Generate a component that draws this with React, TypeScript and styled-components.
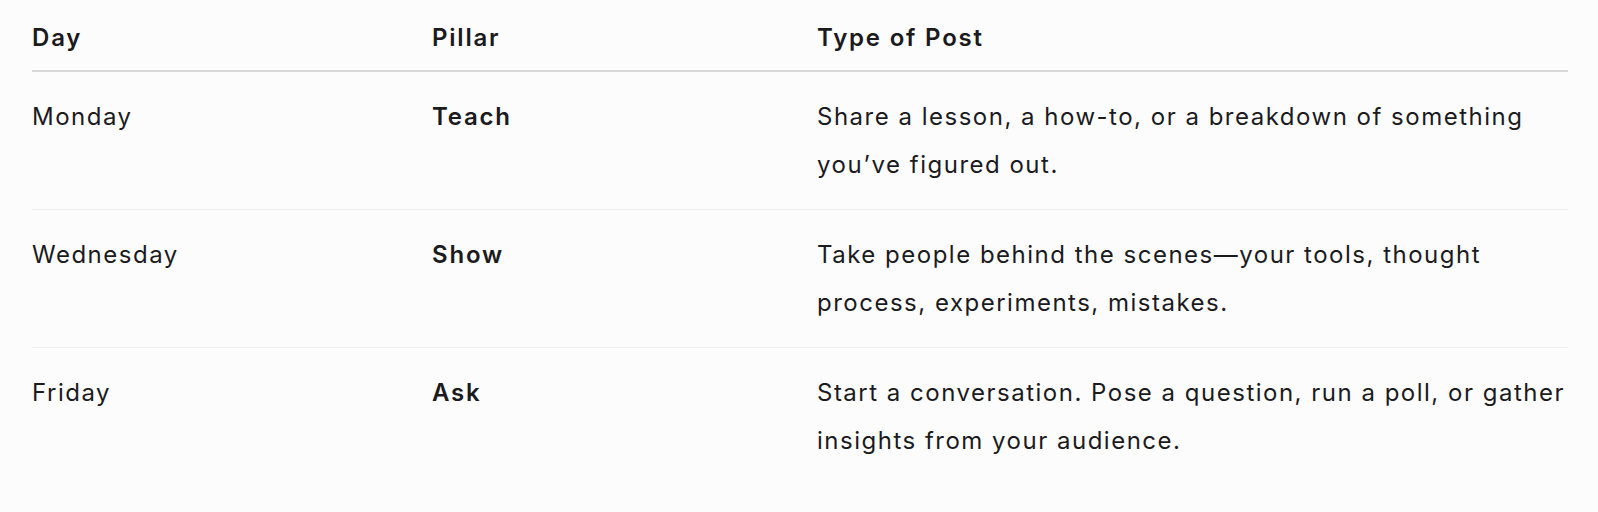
import React from "react"
import styled, { createGlobalStyle } from "styled-components"

const GlobalStyle = createGlobalStyle`
  html, body {
    margin: 0;
    padding: 0;
    background: #fdfcfd;
  }
  body {
    font-family: Inter, "Noto Sans", "Liberation Sans", sans-serif;
    color: #1b1b1d;
    -webkit-font-smoothing: antialiased;
  }
`

type Plan = {
  day: string
  pillar: string
  post: string
}

const plans: Plan[] = [
  { day: "Monday", pillar: "Teach", post: "Share a lesson, a how-to, or a breakdown of something you’ve figured out." },
  { day: "Wednesday", pillar: "Show", post: "Take people behind the scenes—your tools, thought process, experiments, mistakes." },
  { day: "Friday", pillar: "Ask", post: "Start a conversation. Pose a question, run a poll, or gather insights from your audience." },
]

export default function App() {
  return (
    <>
      <GlobalStyle />
      <S.Page>
        <S.Table>
          <colgroup>
            <col style={{ width: 400 }} />
            <col style={{ width: 385 }} />
            <col />
          </colgroup>
          <thead>
            <tr>
              <S.HeadCell>Day</S.HeadCell>
              <S.HeadCell>Pillar</S.HeadCell>
              <S.HeadCell>Type of Post</S.HeadCell>
            </tr>
          </thead>
          <tbody>
            {plans.map((p, i) => (
              <S.Row key={p.day} $last={i === plans.length - 1}>
                <S.Cell>{p.day}</S.Cell>
                <S.Cell $strong>{p.pillar}</S.Cell>
                <S.Cell>{p.post}</S.Cell>
              </S.Row>
            ))}
          </tbody>
        </S.Table>
      </S.Page>
    </>
  )
}

const S = {
  Page: styled.div`
    padding: 0 30px 0 32px;
  `,
  Table: styled.table`
    width: 100%;
    border-collapse: collapse;
    table-layout: fixed;
    font-size: 24px;
    line-height: 48px;
  `,
  HeadCell: styled.th`
    text-align: left;
    font-weight: 600;
    letter-spacing: 1.8px;
    padding: 14px 0 8px;
    border-bottom: 2px solid #d9d9d9;
    vertical-align: top;
  `,
  Row: styled.tr<{ $last?: boolean }>`
    border-bottom: ${(p) => (p.$last ? "none" : "1px solid #f0eff0")};
  `,
  Cell: styled.td<{ $strong?: boolean }>`
    padding: 21px 0 20px 0;
    vertical-align: top;
    font-weight: ${(p) => (p.$strong ? 600 : 400)};
    letter-spacing: ${(p) => (p.$strong ? "1.8px" : "1.5px")};
  `,
}
